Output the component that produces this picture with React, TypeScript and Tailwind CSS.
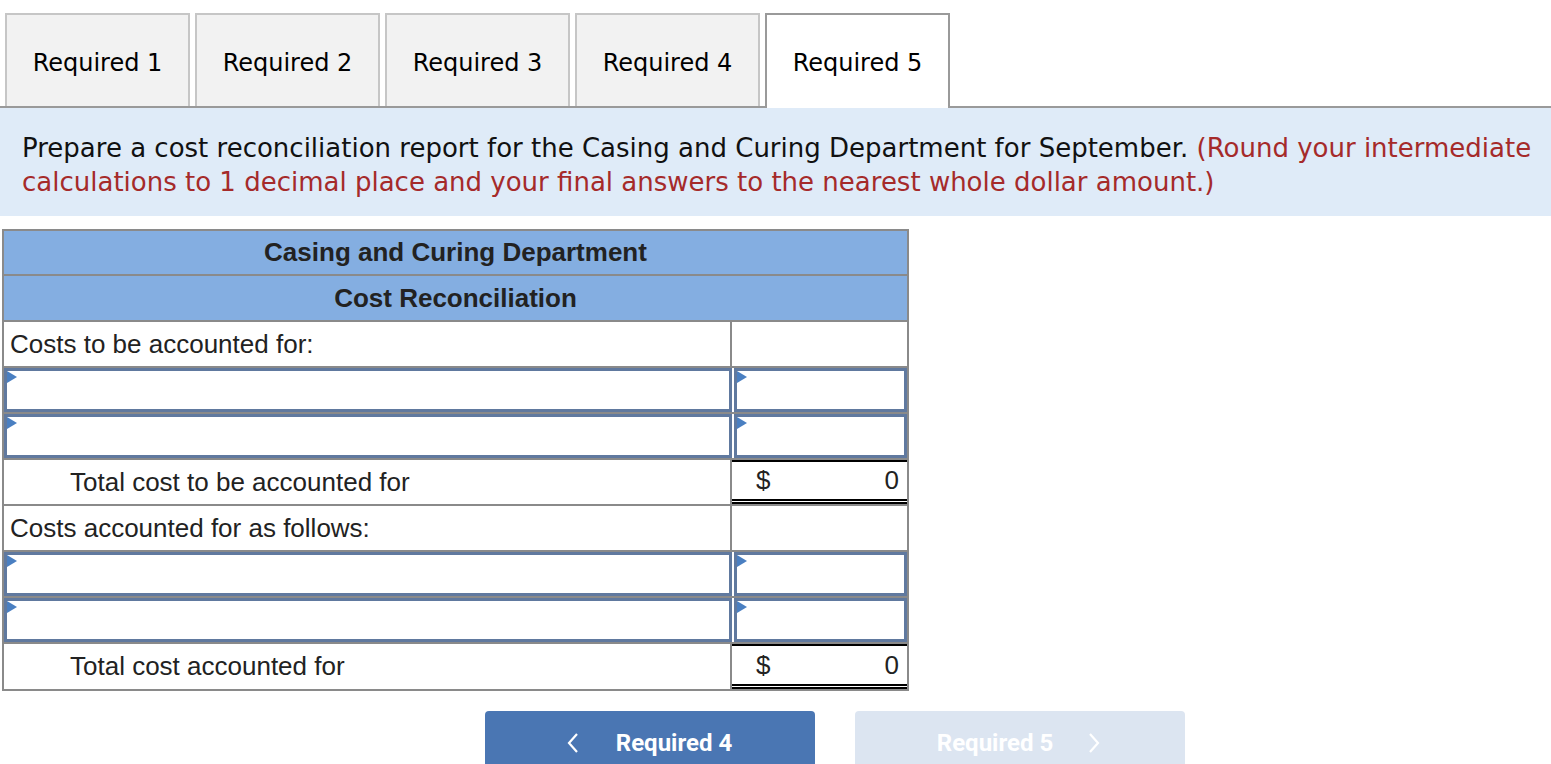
import React from 'react';

const tabs = ['Required 1', 'Required 2', 'Required 3', 'Required 4', 'Required 5'];

const Marker: React.FC = () => (
  <span className="absolute left-0 top-0 w-0 h-0 border-t-[6px] border-b-[6px] border-l-[10px] border-t-transparent border-b-transparent border-l-[#4a7fc1]" />
);

const LabelRow: React.FC<{ label: string }> = ({ label }) => (
  <div className="flex h-[46px] border-b-2 border-[#8a8a8a]">
    <div className="w-[728px] flex items-center pl-[6px] border-r-2 border-[#8a8a8a]">{label}</div>
    <div className="flex-1" />
  </div>
);

const InputRow: React.FC = () => (
  <div className="flex h-[46px] border-b-2 border-[#8a8a8a]">
    <div className="relative w-[728px] border-[3px] border-[#60799f] bg-white">
      <Marker />
    </div>
    <div className="relative flex-1 border-[3px] border-[#60799f] bg-white ml-[2px]">
      <Marker />
    </div>
  </div>
);

const TotalRow: React.FC<{ label: string; last?: boolean }> = ({ label, last }) => (
  <div className={`flex ${last ? 'h-[45px]' : 'h-[46px] border-b-2 border-[#8a8a8a]'}`}>
    <div className="w-[728px] flex items-center pl-[66px] border-r-2 border-[#8a8a8a]">{label}</div>
    <div className="flex-1 flex items-center justify-between pr-[8px] pl-[24px] border-t-2 border-black border-b-[5px] border-b-black border-double">
      <span>$</span>
      <span>0</span>
    </div>
  </div>
);

export default function App() {
  return (
    <div className="w-[1551px] h-[764px] overflow-hidden bg-white relative">
      {/* tabs */}
      <div className="flex gap-[5px] pl-[5px] pt-[13px] border-b-2 border-[#9a9a9a]" style={{ fontFamily: '"DejaVu Sans", Verdana, sans-serif' }}>
        {tabs.map((t, i) => (
          <div
            key={t}
            className={
              i === 4
                ? 'w-[185px] h-[95px] mb-[-2px] flex items-center justify-center bg-white border-2 border-b-0 border-[#9a9a9a] text-[24px] text-black pt-[2px]'
                : 'w-[185px] h-[93px] flex items-center justify-center bg-[#f2f2f2] border-2 border-b-0 border-[#c6c6c6] text-[24px] text-black pt-[5px]'
            }
          >
            {t}
          </div>
        ))}
      </div>

      {/* instructions */}
      <div className="bg-[#dfebf8] h-[108px] pl-[22px] pr-[4px] pt-[23px] text-[26px] leading-[34px] text-[#111]" style={{ fontFamily: '"DejaVu Sans", Verdana, sans-serif' }}>
        Prepare a cost reconciliation report for the Casing and Curing Department for September.{' '}
        <span className="text-[#a52a2a]">(Round your intermediate calculations to 1 decimal place and your final answers to the nearest whole dollar amount.)</span>
      </div>

      {/* table */}
      <div className="ml-[2px] mt-[13px] w-[907px] border-2 border-[#8a8a8a] text-[26px] text-[#222]" style={{ fontFamily: '"Liberation Sans", Arial, sans-serif' }}>
        <div className="h-[45px] flex items-center justify-center bg-[#84aee1] border-b-2 border-[#8a8a8a] font-bold">Casing and Curing Department</div>
        <div className="h-[46px] flex items-center justify-center bg-[#84aee1] border-b-2 border-[#8a8a8a] font-bold">Cost Reconciliation</div>
        <LabelRow label="Costs to be accounted for:" />
        <InputRow />
        <InputRow />
        <TotalRow label="Total cost to be accounted for" />
        <LabelRow label="Costs accounted for as follows:" />
        <InputRow />
        <InputRow />
        <TotalRow label="Total cost accounted for" last />
      </div>

      {/* nav buttons */}
      <div className="flex gap-[40px] ml-[485px] mt-[20px] text-white font-bold text-[24px]" style={{ fontFamily: 'Roboto, "Liberation Sans", sans-serif' }}>
        <button className="w-[330px] h-[60px] rounded-t-[4px] bg-[#4a76b3] flex items-center justify-center gap-[36px] pt-[4px] pr-[2px]">
          <svg width="14" height="24" viewBox="0 0 14 24" fill="none" stroke="white" strokeWidth="2.2">
            <path d="M11 3 L3 12 L11 21" />
          </svg>
          <span>Required 4</span>
        </button>
        <button className="w-[330px] h-[60px] rounded-t-[4px] bg-[#dce5f1] flex items-center justify-center gap-[34px] pt-[4px] pr-[2px]">
          <span>Required 5</span>
          <svg width="14" height="24" viewBox="0 0 14 24" fill="none" stroke="white" strokeWidth="2.2">
            <path d="M3 3 L11 12 L3 21" />
          </svg>
        </button>
      </div>
    </div>
  );
}
